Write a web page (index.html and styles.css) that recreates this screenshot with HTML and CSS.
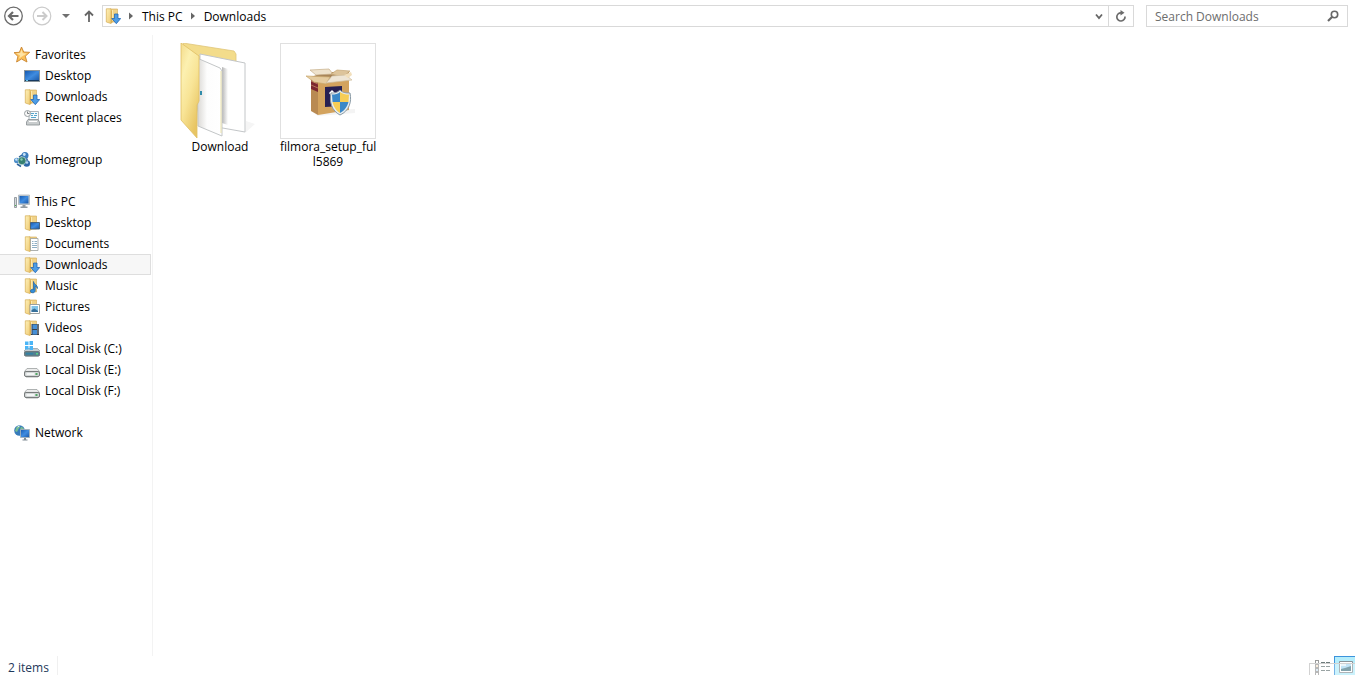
FILE: index.html
```html
<!DOCTYPE html>
<html lang="en">
<head>
    <meta charset="UTF-8">
    <meta name="viewport" content="width=device-width, initial-scale=1.0">
    <title>Downloads</title>
    <link rel="stylesheet" href="styles.css">
</head>
<body>
    <!-- Shared icons -->
    <svg class="sprite" aria-hidden="true">
        <defs>
            <linearGradient id="gFolder" x1="0" y1="0" x2="1" y2="1">
                <stop offset="0" stop-color="#fdf0b8"/>
                <stop offset="1" stop-color="#f0cb74"/>
            </linearGradient>
            <linearGradient id="gScreen" x1="0" y1="0" x2="1" y2="1">
                <stop offset="0" stop-color="#1659b0"/>
                <stop offset="0.5" stop-color="#3f8ce0"/>
                <stop offset="1" stop-color="#1b57a6"/>
            </linearGradient>
            <linearGradient id="gDisk" x1="0" y1="0" x2="0" y2="1">
                <stop offset="0" stop-color="#f4f4f4"/>
                <stop offset="1" stop-color="#b9bdbd"/>
            </linearGradient>
        </defs>
        <symbol id="folder" viewBox="0 0 16 16">
            <path d="M5 1h7.500v13H5z" fill="#f0d288" stroke="#d3aa52" stroke-width="0.600"/>
            <path d="M1.300 .8h4.700v14.700l-4.700-1.500z" fill="url(#gFolder)" stroke="#d5ad55" stroke-width="0.700"/>
            <path d="M6 2.500h1.500v12l-1.500 1z" fill="#d9ae52"/>
            <path d="M7 2h1v10.500h-1z" fill="#fbe9b0"/>
        </symbol>
        <symbol id="downloads" viewBox="0 0 16 16">
            <use href="#folder"/>
            <path d="M9.500 6h3.500v4.500h2.700L11.300 15.700 6.800 10.500h2.700z" fill="#4d9de6" stroke="#2367b4" stroke-width="0.800"/>
        </symbol>
        <symbol id="star" viewBox="0 0 16 16">
            <path d="M7.500 0l2.200 5 6 .3-4.400 3.900 1.700 5.800L7.500 12l-4.900 3 1.300-5.600L0 5.600l5.400-.3z" fill="#fbbf58" stroke="#c98631" stroke-width="0.900"/>
            <path d="M7.500 2.500l1.300 3.700 4 .3-4 2.500L5 11.500l1-3-4-2.200 4.200-.3z" fill="#fee3a4"/>
        </symbol>
        <symbol id="screen" viewBox="0 0 16 16">
            <path d="M0 2h16v12H0z" fill="#89949b"/>
            <path d="M1 3h14v10H1z" fill="url(#gScreen)"/>
            <path d="M1 12h14v1H1z" fill="#163a60"/>
            <path d="M2 12h2v1H2z" fill="#67c5ec"/>
        </symbol>
        <symbol id="recent" viewBox="0 0 16 16">
            <path d="M5 1.500h9.500v10.500H5z" fill="#f6fbfd" stroke="#a5aeb3" stroke-width="0.900"/>
            <path d="M7 3.500h3M11 3.500h2M7 5.500h2M10 5.500h3M7 7.500h5" stroke="#56a6cc"/>
            <circle cx="3.500" cy="3.500" r="3" fill="#f7f7f7" stroke="#8e9699" stroke-width="0.900"/>
            <path d="M3.500 1.500v2h2" fill="none" stroke="#596064" stroke-width="0.800"/>
            <path d="M4 9.500h10L15.500 12v3H2.500v-3z" fill="#c9cdce" stroke="#868d90" stroke-width="0.800"/>
            <path d="M5 11.500h8" stroke="#fff"/>
        </symbol>
        <symbol id="homegroup" viewBox="0 0 16 16">
            <circle cx="2.800" cy="8.500" r="2.800" fill="#4b8cc8"/>
            <circle cx="11" cy="3.500" r="3.500" fill="#3b7dbd"/>
            <circle cx="12.700" cy="11.500" r="3.300" fill="#2c67a8"/>
            <circle cx="8" cy="8.800" r="4" fill="#357f70" stroke="#d4e8ec" stroke-width="0.600"/>
            <path d="M3 12l4 2.500M5 5l3-2M12.500 6.500l1 2" stroke="#2c639c" stroke-width="1.500"/>
            <circle cx="2.300" cy="7.500" r="1.200" fill="#c8e3f7"/>
            <circle cx="10.300" cy="2.500" r="1.400" fill="#c8e3f7"/>
            <circle cx="13" cy="10.500" r="1.300" fill="#b5d7f2"/>
            <circle cx="7.500" cy="7.500" r="1.200" fill="#85ccae"/>
        </symbol>
        <symbol id="pc" viewBox="0 0 16 16">
            <path d="M0.500 3.500h2v10H0.500z" fill="#d4d8da" stroke="#838b90" stroke-width="0.800"/>
            <path d="M1 11h1v1H1z" fill="#48b34f"/>
            <path d="M4.500 1h11v9.500h-11z" fill="#c6ced3" stroke="#a4adb4" stroke-width="0.700"/>
            <path d="M5.500 2h9v7.500h-9z" fill="url(#gScreen)"/>
            <path d="M8.500 11h3v1.500h2V14H6.500v-1.500h2z" fill="#939ca2"/>
        </symbol>
        <symbol id="f-desktop" viewBox="0 0 16 16">
            <use href="#folder"/>
            <path d="M6.500 7.500h9V14H6.500z" fill="url(#gScreen)" stroke="#435e77" stroke-width="0.900"/>
        </symbol>
        <symbol id="f-documents" viewBox="0 0 16 16">
            <use href="#folder"/>
            <path d="M6.500 2.500h7.500v12H6.500z" fill="#fff" stroke="#9b9f9f" stroke-width="0.800"/>
            <path d="M8 5.500h1.500M10.500 5.500h2.500M8 7.500h1.500M10.500 7.500h2.500M8 9.500h5M8 11.500h5" stroke="#8eafc4"/>
        </symbol>
        <symbol id="f-music" viewBox="0 0 16 16">
            <use href="#folder"/>
            <path d="M9.500 3.500c0 3 4.500 3 4 7-.5-1.500-1.500-2-2.300-2.200V12.500c0 3-4.700 3-4.700.7 0-1.700 1.700-2.300 3-1.700z" fill="#348fd8" stroke="#205e9f" stroke-width="0.700"/>
        </symbol>
        <symbol id="f-pictures" viewBox="0 0 16 16">
            <use href="#folder"/>
            <path d="M6 5.500h9.500v9H6z" fill="#fff" stroke="#8f979b" stroke-width="0.900"/>
            <path d="M7.500 7h6.500V13H7.500z" fill="#7fc3e8"/>
            <path d="M7.500 11l3-1.500L14 12v1H7.500z" fill="#37709b"/>
        </symbol>
        <symbol id="f-videos" viewBox="0 0 16 16">
            <use href="#folder"/>
            <path d="M7 4h8v11H7z" fill="#37404c"/>
            <path d="M8.500 4.500h4.500v4.500H8.500zM8.500 10h4.500v4.500H8.500z" fill="#468fd6"/>
            <path d="M7.500 4.500v10M14 4.500v10" stroke="#f2f2f2" stroke-dasharray="1 1"/>
        </symbol>
        <symbol id="disk" viewBox="0 0 16 16">
            <path d="M3 6.500h10l2.500 3v4l-1.500 1.500H2L.5 13.500v-4z" fill="url(#gDisk)" stroke="#9b9f9f" stroke-width="0.800"/>
            <rect x="0.500" y="9.500" width="15" height="5" rx="1.500" fill="#d3d7d7" stroke="#787c7c"/>
            <path d="M2.500 11h8v2H2.500z" fill="#f4f6f6"/>
            <path d="M11.500 11h2v2h-2z" fill="#53a866"/>
        </symbol>
        <symbol id="disk-c" viewBox="0 0 16 16">
            <path d="M2.500 7.500h11l2.500 2.500v4l-1 1H1l-1-1v-4z" fill="#c6cdd1" stroke="#8c979c" stroke-width="0.700"/>
            <rect x="0.500" y="10.500" width="15" height="4.500" rx="1.500" fill="#53808f" stroke="#6d787d"/>
            <path d="M2 12h7v1.500H2z" fill="#3481a5"/>
            <path d="M12 12h2v1.500h-2z" fill="#59cf83"/>
            <path d="M1 .5h3.500V4H1zM5.500 0H9v4H5.500zM1 5h3.500v3.500H1zM5.500 5H9v4H5.500z" fill="#4bb5f6"/>
        </symbol>
        <symbol id="network" viewBox="0 0 16 16">
            <circle cx="5.500" cy="5.500" r="5.300" fill="#367bbb"/>
            <path d="M2 3c2-3 4-2 4-1L4.500 4 3 7 1 6zM7 1.500l3 2-2 2-2-1z" fill="#78bd91"/>
            <path d="M3.500 2l2-1" stroke="#dbedf5"/>
            <path d="M6.500 4.500h9v8h-9z" fill="url(#gScreen)" stroke="#a5b2ba" stroke-width="0.900"/>
            <path d="M10 13h2v1.500h1.500v1H8.500v-1H10z" fill="#808c94"/>
        </symbol>
    </svg>

    <!-- Navigation bar -->
    <header class="toolbar">
        <div class="nav-buttons">
            <button class="nav-btn" aria-label="Back">
                <svg width="20" height="20" viewBox="0 0 20 20" fill="none" stroke="#6b6b6b"><circle cx="9.500" cy="10" r="8.800" stroke-width="1.300"/><path d="M14.500 10H6M9 6L5 10l4 4" stroke-width="2.200"/></svg>
            </button>
            <button class="nav-btn" aria-label="Forward" disabled>
                <svg width="20" height="20" viewBox="0 0 20 20" fill="none" stroke="#cbcbcb"><circle cx="10" cy="10" r="8.800" stroke-width="1.200"/><path d="M5 10h9M10.500 6l4 4-4 4" stroke-width="2"/></svg>
            </button>
            <button class="nav-btn history" aria-label="Recent locations">
                <svg width="8" height="4" viewBox="0 0 8 4"><path d="M0 0h8L4 4z" fill="#707070"/></svg>
            </button>
            <button class="nav-btn" aria-label="Up">
                <svg width="10" height="12" viewBox="0 0 10 12" fill="none" stroke="#666" stroke-width="1.800"><path d="M5 12V1.500M1 5.500l4-4 4 4"/></svg>
            </button>
        </div>
        <div class="address">
            <svg class="icon" aria-hidden="true"><use href="#downloads"/></svg>
            <svg class="arrow" viewBox="0 0 4 8"><path d="M0 0.500v7l4-3.500z"/></svg>
            <a href="#">This PC</a>
            <svg class="arrow" viewBox="0 0 4 8"><path d="M0 0.500v7l4-3.500z"/></svg>
            <a href="#">Downloads</a>
            <button class="drop" aria-label="Previous locations">
                <svg width="8" height="7" viewBox="0 0 8 7"><path d="M1 1.500l3 3.500 3-3.500" fill="none" stroke="#666" stroke-width="1.800"/></svg>
            </button>
            <button class="refresh" aria-label="Refresh">
                <svg width="12" height="12" viewBox="0 0 12 12"><path d="M10 6.500A4.100 4.100 0 1 1 6 2.800" fill="none" stroke="#6b6b6b" stroke-width="1.700"/><path d="M5.500 0v5.500l4-2.700z" fill="#6b6b6b"/></svg>
            </button>
        </div>
        <form class="search">
            <input type="text" placeholder="Search Downloads" aria-label="Search Downloads">
            <button type="button" aria-label="Search">
                <svg width="12" height="12" viewBox="0 0 12 12" fill="none" stroke="#666"><circle cx="7.500" cy="4.500" r="3.200" stroke-width="1.600"/><path d="M5 7L1 11" stroke-width="2.200"/></svg>
            </button>
        </form>
    </header>

    <main class="window">
        <!-- Folder tree -->
        <nav class="sidebar">
            <div class="group">
                <a class="root" href="#"><svg class="icon"><use href="#star"/></svg>Favorites</a>
                <a href="#"><svg class="icon"><use href="#screen"/></svg>Desktop</a>
                <a href="#"><svg class="icon"><use href="#downloads"/></svg>Downloads</a>
                <a href="#"><svg class="icon"><use href="#recent"/></svg>Recent places</a>
            </div>
            <div class="group">
                <a class="root" href="#"><svg class="icon"><use href="#homegroup"/></svg>Homegroup</a>
            </div>
            <div class="group">
                <a class="root" href="#"><svg class="icon"><use href="#pc"/></svg>This PC</a>
                <a href="#"><svg class="icon"><use href="#f-desktop"/></svg>Desktop</a>
                <a href="#"><svg class="icon"><use href="#f-documents"/></svg>Documents</a>
                <a class="selected" href="#"><svg class="icon"><use href="#downloads"/></svg>Downloads</a>
                <a href="#"><svg class="icon"><use href="#f-music"/></svg>Music</a>
                <a href="#"><svg class="icon"><use href="#f-pictures"/></svg>Pictures</a>
                <a href="#"><svg class="icon"><use href="#f-videos"/></svg>Videos</a>
                <a href="#"><svg class="icon"><use href="#disk-c"/></svg>Local Disk (C:)</a>
                <a href="#"><svg class="icon"><use href="#disk"/></svg>Local Disk (E:)</a>
                <a href="#"><svg class="icon"><use href="#disk"/></svg>Local Disk (F:)</a>
            </div>
            <div class="group">
                <a class="root" href="#"><svg class="icon"><use href="#network"/></svg>Network</a>
            </div>
        </nav>

        <!-- Files -->
        <section class="files">
            <a class="file" href="#">
                <svg class="thumb" viewBox="-2 0 96 96">
                    <defs>
                        <linearGradient id="gFlap" x1="0" y1="0" x2="0.600" y2="1">
                            <stop offset="0" stop-color="#f4dc8c"/>
                            <stop offset="0.300" stop-color="#fcf0b0"/>
                            <stop offset="0.600" stop-color="#f8e496"/>
                            <stop offset="1" stop-color="#e8c563"/>
                        </linearGradient>
                        <linearGradient id="gPage" x1="0" y1="0" x2="1" y2="0">
                            <stop offset="0" stop-color="#d8d6d2"/>
                            <stop offset="0.400" stop-color="#fdfdfd"/>
                            <stop offset="1" stop-color="#fff"/>
                        </linearGradient>
                        <linearGradient id="gShade" x1="0" y1="0" x2="1" y2="0">
                            <stop offset="0" stop-color="#b6b6b6"/>
                            <stop offset="1" stop-color="#fff"/>
                        </linearGradient>
                    </defs>
                    <path d="M72 78l9 3-10 9z" fill="#f5f5f5"/>
                    <path d="M9 0l51 8 2 3v70l-36-4z" fill="#f3dc8b" stroke="#dfc578" stroke-width="0.800"/>
                    <path d="M26 11l45 9v69l-45-8z" fill="#fff" stroke="#c3c6c8"/>
                    <path d="M48 24l6 2v56l-6-2z" fill="url(#gShade)"/>
                    <path d="M23 15l23 10 2 3v65l-24-10z" fill="url(#gPage)" stroke="#c3c6c7"/>
                    <path d="M47 28v62" stroke="#ebe2aa"/>
                    <path d="M7 0l18 13v45l-2 4v33L7 77z" fill="url(#gFlap)" stroke="#dfbf65" stroke-width="0.800"/>
                    <path d="M26 48h2v4h-2z" fill="#318caa"/>
                </svg>
                <span>Download</span>
            </a>
            <a class="file" href="#">
                <svg class="thumb framed" viewBox="0 0 94 94">
                    <path d="M30 67l7 5 37-3v-4z" fill="#f4f4f4"/>
                    <path d="M30 33l7 3v35l-7-4z" fill="#b98a52"/>
                    <path d="M30 33l7 3v12l-7-3z" fill="#7d2630"/>
                    <path d="M30 37l7 3M30 41l7 3" stroke="#c28464" stroke-width="0.800"/>
                    <path d="M37 36l31-2v32l-31 5z" fill="#d3a35e"/>
                    <path d="M30 33l14-5h24v6l-31 4z" fill="#a88458"/>
                    <path d="M29 26l19-1 4 5-17 1z" fill="#eee2cc" stroke="#c6ad86" stroke-width="0.700"/>
                    <path d="M50 30l6-4 13 1-7 6z" fill="#ddc49b" stroke="#c6a674" stroke-width="0.700"/>
                    <path d="M25 32l24 1-4 7-12-2z" fill="#e5cca0" stroke="#c9a76d" stroke-width="0.700"/>
                    <path d="M45 39l6-7 14-1 6 5z" fill="#eee5d5" stroke="#cfbd9d" stroke-width="0.700"/>
                    <path d="M63 31l7-3 1 3-4 3z" fill="#f2dfbc"/>
                    <path d="M44 43l17-1v20l-17 1V45z" fill="#272052"/>
                    <path d="M48 49l3-3 3 3-3 4z" fill="#fff"/>
                    <path d="M49 54l4-1v4z" fill="#41b8cf"/>
                    <path d="M59 46c3 3 6 3 10 3 2 9-1 18-10 22-8-4-11-13-9-22 3 0 6 0 9-3z" fill="#e9eef0" stroke="#8999a4"/>
                    <path d="M59 48v10h-7.500l-.5-7.500c3 0 6-.5 8-2.500zM59 58h8.500c-1 4-4 9-8.500 11z" fill="#3a88c8"/>
                    <path d="M59 48c3 2 5 2.500 9 2.500L67.500 58H59zM51.500 58H59v11c-4-2-6.500-7-7.500-11z" fill="#f6cd55"/>
                </svg>
                <span>filmora_setup_ful<br>l5869</span>
            </a>
        </section>
    </main>

    <footer class="statusbar">
        <span class="count">2 items</span>
        <div class="views">
            <button class="view" aria-label="Details">
                <svg width="16" height="16" viewBox="0 0 16 16">
                    <g fill="#fff" stroke="#9a9a9a"><rect x="1.500" y="0.500" width="3" height="3"/><rect x="1.500" y="4.500" width="3" height="3"/><rect x="1.500" y="8.500" width="3" height="3"/><rect x="1.500" y="12.500" width="3" height="3"/></g>
                    <path d="M2.500 6h1" stroke="#e4a64d"/><path d="M2.500 10h1" stroke="#459bd6"/>
                    <path d="M7 2.500h4M12 2.500h4M7 6.500h4M12 6.500h4M7 10.500h4M12 10.500h4" stroke="#6e7b7b"/>
                </svg>
            </button>
            <button class="view active" aria-label="Large icons">
                <svg width="14" height="12" viewBox="0 0 14 12"><path d="M.5.5h13v11H.5z" fill="#fff" stroke="#8a9398"/><path d="M2 2h10v8H2z" fill="#a8d9f3"/><path d="M2 8l4-1 6-2v5H2z" fill="#4d7b89"/><path d="M2 2h5v3H2z" fill="#e3f3fa"/></svg>
            </button>
            <div class="haze"></div>
        </div>
    </footer>
</body>
</html>
```

FILE: styles.css
```css
* {
    box-sizing: border-box;
}

body {
    display: flex;
    flex-direction: column;
    height: 100vh;
    margin: 0;
    overflow: hidden;
    background: #fff;
    color: #000;
    font-family: "Segoe UI", "Open Sans", sans-serif;
    font-size: 12px;
    line-height: 15px;
}

a {
    color: inherit;
    text-decoration: none;
}

button {
    display: flex;
    align-items: center;
    justify-content: center;
    margin: 0;
    padding: 0;
    border: 0;
    background: none;
}

.sprite {
    position: absolute;
    width: 0;
    height: 0;
}

.icon {
    flex: none;
    width: 16px;
    height: 16px;
}

/* Navigation bar */
.toolbar {
    display: flex;
    flex: none;
    height: 35px;
    padding: 5px 7px 8px 4px;
}

.nav-buttons {
    display: flex;
    align-items: center;
    width: 98px;
}

.nav-btn {
    height: 22px;
    margin-right: 8px;
}

.history {
    width: 8px;
    margin: 0 14px 0 2px;
}

.address {
    display: flex;
    flex: 1;
    align-items: center;
    min-width: 0;
    margin-right: 12px;
    padding-left: 2px;
    border: 1px solid #d9d9d9;
}

.arrow {
    width: 4px;
    height: 8px;
    margin: 0 9px 0 8px;
    fill: #666;
}

.drop {
    width: 18px;
    height: 20px;
    margin-left: auto;
}

.refresh {
    width: 25px;
    height: 20px;
    border-left: 1px solid #d9d9d9;
}

.search {
    display: flex;
    width: 202px;
    border: 1px solid #d9d9d9;
}

.search input {
    flex: 1;
    min-width: 0;
    padding: 0 8px;
    border: 0;
    outline: 0;
    background: none;
    font: inherit;
}

.search input::placeholder {
    color: #6d6d6d;
    opacity: 1;
}

.search button {
    width: 28px;
}

/* Folder tree */
.window {
    display: flex;
    flex: 1;
    min-height: 0;
}

.sidebar {
    width: 153px;
    padding: 9px 1px 0 0;
    border-right: 1px solid #f3f3f3;
}

.group {
    margin-bottom: 21px;
}

.group a {
    display: flex;
    align-items: center;
    gap: 5px;
    height: 21px;
    padding-left: 24px;
    white-space: nowrap;
}

.group .root {
    padding-left: 14px;
}

.group .selected {
    border: 1px solid #dedede;
    border-left: 0;
    background: #f7f7f7;
}

/* Files */
.files {
    display: flex;
    flex: 1;
    align-items: flex-start;
    gap: 12px;
    padding: 8px 19px;
}

.file {
    width: 96px;
    text-align: center;
    white-space: nowrap;
}

.thumb {
    display: block;
    width: 96px;
    height: 96px;
}

.framed {
    border: 1px solid #e0e0e0;
}

/* Status bar */
.statusbar {
    display: flex;
    flex: none;
    align-items: stretch;
    justify-content: space-between;
    height: 19px;
}

.count {
    padding: 4px 8px 0 8px;
    border-right: 1px solid #f0f0f0;
    color: #1e395b;
}

.views {
    position: relative;
    display: flex;
}

.view {
    align-items: flex-start;
    width: 25px;
    padding-top: 4px;
}

.active {
    width: 21px;
    padding-left: 2px;
    border: 1px solid #3c93dc;
    border-width: 1px 0 0 1px;
    background: #b5edfb;
}

/* Faint sheet lying over the view buttons */
.haze {
    position: absolute;
    inset: 7px 0 0 0;
    border: 1px solid #d2d2d2;
    border-width: 1px 0 0 1px;
    background: rgba(255, 255, 255, 0.3);
}
```
